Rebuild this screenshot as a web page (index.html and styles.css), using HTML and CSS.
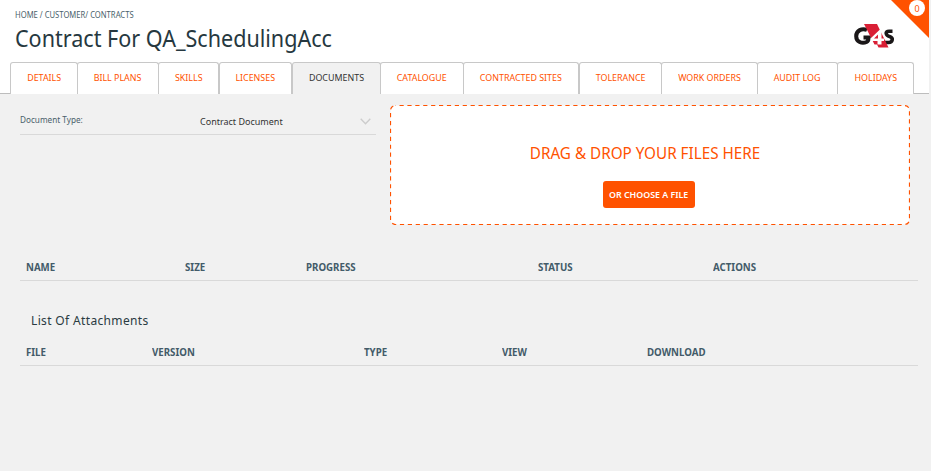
FILE: index.html
```
<!DOCTYPE html>
<html lang="en">
<head>
<meta charset="utf-8">
<title>Contract</title>
<link rel="stylesheet" href="styles.css">
</head>
<body>
<div class="page">
  <header class="header">
    <div class="crumbs">HOME / CUSTOMER/ CONTRACTS</div>
    <h1 class="title">Contract For QA_SchedulingAcc</h1>
    <svg class="logo" width="42" height="26" viewBox="0 0 42 26">
      <path d="M13 7C8 4.800 2.200 7.500 2.200 13.200C2.200 19 8 21 12.500 19Q14.800 17.800 14.800 14.500H9.500" fill="none" stroke="#1a1718" stroke-width="4"/>
      <path d="M38.500 8.200H35Q31.800 8.200 32.200 10.500T35.500 13.500Q38.700 14.500 38.200 17T34.500 19.500H30.500" fill="none" stroke="#1a1718" stroke-width="3.600"/>
      <path d="M10 1H23L34.500 24.500H24.500L23 21.500H20.500Z" fill="#d91f35"/>
      <path d="M26.500 6L16.500 15.500V18H23.500V21.500H27.500V18H30V15.500H27.500V6Z" fill="#fff"/>
      <path d="M24 11.500V15.500H20Z" fill="#d91f35"/>
    </svg>
    <svg class="corner" width="56" height="38" viewBox="0 0 56 38">
      <path d="M15 0H53V38Z" fill="#ff5200"/>
      <circle cx="41" cy="8" r="8" fill="#fff"/>
    </svg>
    <span class="count">0</span>
  </header>
  <nav class="tabs">
    <a class="tab t1"><span>DETAILS</span></a>
    <a class="tab t2"><span>BILL PLANS</span></a>
    <a class="tab t3"><span>SKILLS</span></a>
    <a class="tab t4 apart"><span>LICENSES</span></a>
    <a class="tab t5 apart active"><span>DOCUMENTS</span></a>
    <a class="tab t6"><span>CATALOGUE</span></a>
    <a class="tab t7"><span>CONTRACTED SITES</span></a>
    <a class="tab t8 apart"><span>TOLERANCE</span></a>
    <a class="tab t9"><span>WORK ORDERS</span></a>
    <a class="tab t10"><span>AUDIT LOG</span></a>
    <a class="tab t11"><span>HOLIDAYS</span></a>
  </nav>
  <main class="main">
    <section class="upload">
      <div class="field">
        <label class="label"><span>Document Type:</span></label>
        <span class="value">Contract Document</span>
        <svg class="chevron" width="11" height="7" viewBox="0 0 11 7"><path d="M.7.7L5.500 5.700L10.300.7" fill="none" stroke="#ccc" stroke-width="1.300"/></svg>
      </div>
      <div class="drop">
        <svg class="dash" width="520" height="120"><rect x=".5" y=".5" width="519" height="119" rx="5" fill="#fff" stroke="#ff5200" stroke-width="1.200" stroke-dasharray="4.200 3.700" stroke-dashoffset="-4"/></svg>
        <div class="drop-text">DRAG &amp; DROP YOUR FILES HERE</div>
        <button class="choose"><span>OR CHOOSE A FILE</span></button>
      </div>
    </section>
    <div class="row files"><b>NAME</b><b>SIZE</b><b>PROGRESS</b><b>STATUS</b><b>ACTIONS</b></div>
    <h2 class="subtitle">List Of Attachments</h2>
    <div class="row attachments"><b>FILE</b><b>VERSION</b><b>TYPE</b><b>VIEW</b><b>DOWNLOAD</b></div>
  </main>
</div>
</body>
</html>
```
FILE: styles.css
```
* { box-sizing: border-box; }
body {
  margin: 0;
  height: 471px;
  overflow: hidden;
  background: #f1f1f1;
  font-family: "Noto Sans", sans-serif;
  color: #2a3b42;
}
.header { position: relative; width: 929px; height: 62px; background: #fff; padding: 8px 0 0 15px; }
.crumbs { font-size: 9px; line-height: 14px; color: #4a5f6b; white-space: nowrap; transform: scaleX(.85); transform-origin: 0 0; }
.title { margin: 0; font-size: 24px; line-height: 31px; font-weight: 400; white-space: nowrap; color: #263840; transform: scaleX(.898); transform-origin: 0 0; }
.logo { position: absolute; left: 854px; top: 23px; }
.corner { position: absolute; left: 876px; top: 0; }
.count { position: absolute; left: 909px; top: 2px; width: 16px; text-align: center; font-size: 9px; line-height: 13px; color: #ff5200; }
.tabs {
  width: 929px; height: 32px; padding-left: 10px; display: flex;
  background: linear-gradient(#bdbdbd, #bdbdbd) 0 31px / 100% 1px no-repeat #fff;
}
.tab {
  height: 32px; flex: none; background: #fff; border: 1px solid #c8c8c8; border-bottom: 0;
  border-radius: 3px 3px 0 0; text-align: center; color: #ff5200; font-size: 9.500px; line-height: 30px; white-space: nowrap;
}
.tab span { display: inline-block; margin: 0 -10px; transform: scaleX(.935); }
.tab + .tab { margin-left: -1px; }
.tab + .apart { margin-left: 0; }
.active { background: #f1f1f1; color: #333; }
.t1 { width: 68px; }
.t2 { width: 82px; }
.t3 { width: 61px; }
.t4 { width: 73px; }
.t5 { width: 89px; }
.t6 { width: 84px; }
.t7 { width: 116px; }
.t8 { width: 83px; }
.t9 { width: 97px; }
.t10 { width: 81px; }
.t11 { width: 77px; }
.main { padding: 11px 13px 0 20px; }
.upload { display: flex; gap: 14px; height: 120px; }
.field { width: 356px; height: 30px; border-bottom: 1px solid #d9d9d9; display: flex; font-size: 9px; white-space: nowrap; }
.label { width: 180px; line-height: 30px; color: #4a5f6b; }
.label span { display: inline-block; transform: scaleX(.91); transform-origin: 0 0; }
.value { width: 160px; line-height: 33px; color: #333; }
.chevron { margin-top: 13px; }
.drop { position: relative; width: 520px; height: 120px; text-align: center; }
.dash { position: absolute; inset: 0; }
.drop-text { position: relative; padding: 37px 10px 0 0; font-size: 16px; line-height: 22px; color: #ff5200; white-space: nowrap; transform: scaleX(.953); transform-origin: 255px 0; }
.choose {
  position: relative; display: block; margin: 17px 0 0 213px; width: 92px; height: 27px; padding: 0;
  border: 0; border-radius: 3px; background: #ff5200; color: #fff; font: inherit; font-weight: 600; font-size: 9.500px; white-space: nowrap;
}
.choose span { display: inline-block; margin: 0 -5px; transform: scaleX(.93); }
.row { display: grid; padding-left: 6px; width: 898px; border-bottom: 1px solid #d9d9d9; font-size: 10.500px; line-height: 14px; color: #435b69; }
.row b { transform: scaleX(.925); transform-origin: 0 0; }
.files { height: 56px; padding-top: 35px; grid-template-columns: 159px 121px 232px 175px 1fr; }
.subtitle { margin: 30px 0 0 11px; height: 20px; font-size: 12px; line-height: 20px; font-weight: 400; letter-spacing: .35px; }
.attachments { height: 35px; padding-top: 14px; grid-template-columns: 126px 212px 138px 145px 1fr; }
```
